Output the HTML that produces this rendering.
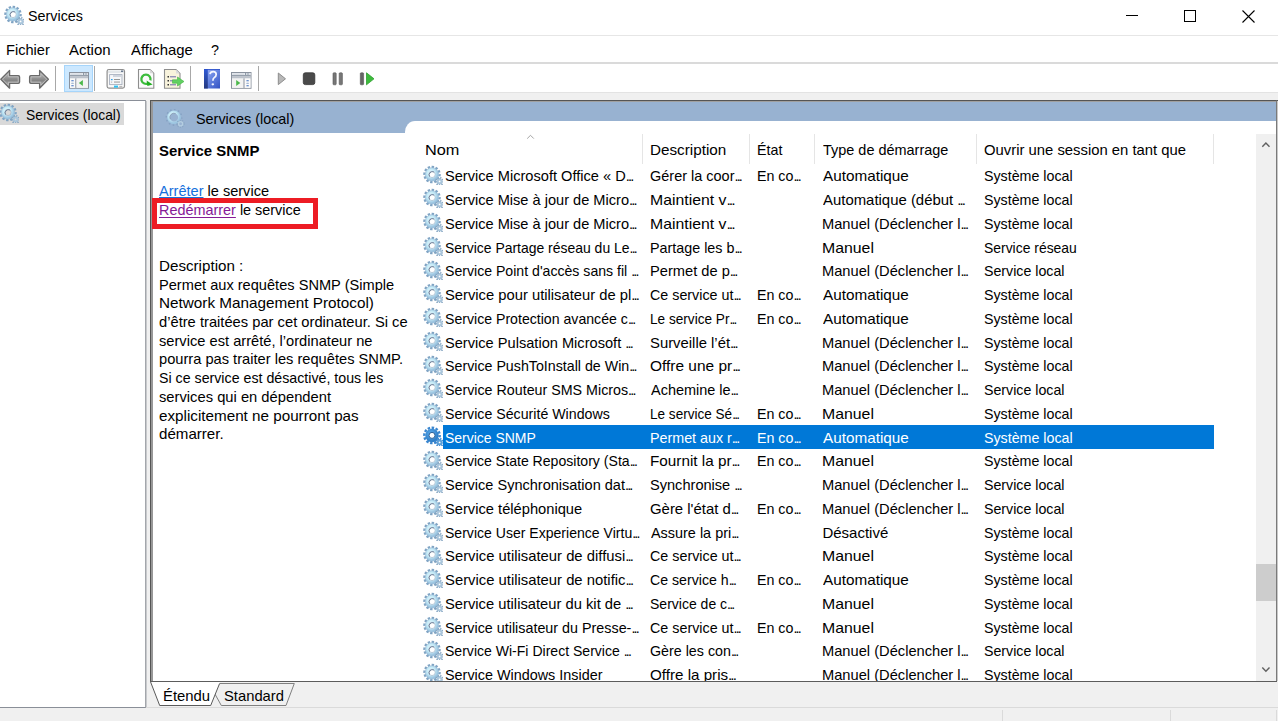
<!DOCTYPE html>
<html><head><meta charset="utf-8"><style>
html,body{margin:0;padding:0;}
body{width:1278px;height:721px;position:relative;overflow:hidden;background:#f0f0f0;font-family:"Liberation Sans",sans-serif;color:#000;}
.top{position:absolute;left:0;top:0;width:1278px;height:92px;background:#fff}
.t{position:absolute;white-space:nowrap;line-height:1;transform-origin:0 0;}
.c{overflow:hidden}
.b{position:absolute}
.ic{position:absolute;overflow:visible}
.el{font-style:normal;letter-spacing:-1.9px;}
.lk{color:#1670dc;text-decoration:underline;text-decoration-thickness:1px}
.lk2{color:#861a96;text-decoration:underline;text-decoration-thickness:1px;text-underline-offset:2px}
</style></head><body>
<div class="top"></div>

<svg width="0" height="0" style="position:absolute">
 <defs>
  <radialGradient id="gb" gradientUnits="userSpaceOnUse" cx="8" cy="8" r="7">
   <stop offset="0" stop-color="#eefaff"/>
   <stop offset="0.55" stop-color="#c6ebf7"/>
   <stop offset="1" stop-color="#9cc4e0"/>
  </radialGradient>
  <radialGradient id="gbs" gradientUnits="userSpaceOnUse" cx="8" cy="8" r="7">
   <stop offset="0" stop-color="#5fb0f0"/>
   <stop offset="1" stop-color="#2f7fc8"/>
  </radialGradient>
  <symbol id="gear" viewBox="0 0 20 20">
   <circle cx="9" cy="9.4" r="7.6" fill="none" stroke="#7fa3c3" stroke-width="2.3" stroke-dasharray="2.4 1.58" stroke-dashoffset="0.6"/>
   <circle cx="9" cy="9.4" r="4.95" fill="none" stroke="url(#gb)" stroke-width="3.5"/>
   <circle cx="9" cy="9.4" r="6.75" fill="none" stroke="#8fb3cf" stroke-width="0.5"/>
   <path d="M6.6 11.6 A3.3 3.3 0 0 1 11.0 7.0" fill="none" stroke="#60728c" stroke-width="1.0"/>
   <circle cx="9" cy="9.4" r="3.15" fill="none" stroke="#8aa0b8" stroke-width="0.5"/>
   <circle cx="16.6" cy="16.4" r="3.6" fill="none" stroke="#86a6c2" stroke-width="1.9" stroke-dasharray="1.3 1.14"/>
   <circle cx="16.6" cy="16.4" r="1.85" fill="none" stroke="#aac6dc" stroke-width="1.9"/>
  </symbol>
  <symbol id="gearsel" viewBox="0 0 20 20">
   <circle cx="9" cy="9.4" r="7.7" fill="none" stroke="#3a86cf" stroke-width="2.4" stroke-dasharray="2.5 1.53" stroke-dashoffset="0.6"/>
   <circle cx="9" cy="9.4" r="4.75" fill="none" stroke="url(#gbs)" stroke-width="4"/>
   <circle cx="9" cy="9.4" r="3.0" fill="#fff" stroke="#2a5f98" stroke-width="1.0"/>
   <circle cx="16.6" cy="16.4" r="3.6" fill="none" stroke="#3a86cf" stroke-width="1.9" stroke-dasharray="1.3 1.14"/>
   <circle cx="16.6" cy="16.4" r="1.85" fill="none" stroke="#5a9fd8" stroke-width="1.9"/>
  </symbol>
 </defs>
</svg>
<svg class="ic" style="left:4px;top:5px;width:20px;height:20px" viewBox="0 0 20 20"><use href="#gear"/></svg><div class="t " style="left:28.34px;top:7.94px;font-size:15px;transform:scaleX(0.9554);">Services</div><div class="b" style="left:1126px;top:15px;width:12px;height:1px;background:#000"></div><div class="b" style="left:1184px;top:10px;width:10px;height:10px;border:1px solid #000"></div><svg class="ic" style="left:1242px;top:10px;width:14px;height:13px" viewBox="0 0 14 13"><path d="M0.5 0.5L12.5 12.5M12.5 0.5L0.5 12.5" stroke="#000" stroke-width="1.1" fill="none"/></svg><div class="b" style="left:0;top:35px;width:1278px;height:1px;background:#e6e6e6"></div><div class="t " style="left:6.23px;top:41.84px;font-size:15px;transform:scaleX(0.9727);">Fichier</div><div class="t " style="left:69.30px;top:41.84px;font-size:15px;transform:scaleX(0.9976);">Action</div><div class="t " style="left:130.50px;top:41.84px;font-size:15px;transform:scaleX(0.9919);">Affichage</div><div class="t " style="left:211.34px;top:41.84px;font-size:15px;transform:scaleX(0.9571);">?</div><div class="b" style="left:0;top:62px;width:1278px;height:2px;background:#dadada"></div><svg class="ic" style="left:0;top:64px;width:400px;height:28px" viewBox="0 64 400 28">
 <defs>
  <linearGradient id="ag" x1="0" y1="0" x2="0" y2="1"><stop offset="0" stop-color="#b4b4b4"/><stop offset="0.6" stop-color="#858585"/><stop offset="1" stop-color="#a8a8a8"/></linearGradient>
  <linearGradient id="hb2" x1="0" y1="0" x2="1" y2="1"><stop offset="0" stop-color="#9db2f4"/><stop offset="0.5" stop-color="#6382e0"/><stop offset="1" stop-color="#3151c2"/></linearGradient>
  <linearGradient id="hb1" x1="0" y1="0" x2="0" y2="1"><stop offset="0" stop-color="#2f5ad6"/><stop offset="1" stop-color="#24387e"/></linearGradient>
 </defs>
 <!-- back arrow -->
 <path d="M0.8 79.2 L9.6 70.4 L9.6 75.6 L18.3 75.6 Q19.6 75.6 19.6 76.9 L19.6 82.1 Q19.6 83.4 18.3 83.4 L9.6 83.4 L9.6 88.2 Z" fill="#9c9c9c" stroke="#6a6a6a" stroke-width="1.3" stroke-linejoin="round"/>
 <path d="M2.6 79.2 L8.4 73.4 L8.4 76.8 L18.2 76.8 L18.2 82.2 L8.4 82.2 L8.4 85.2 Z" fill="url(#ag)" stroke="#c9c9c9" stroke-width="0.7" stroke-linejoin="round"/>
 <!-- forward arrow -->
 <path d="M48.4 79.2 L39.6 70.4 L39.6 75.6 L30.9 75.6 Q29.6 75.6 29.6 76.9 L29.6 82.1 Q29.6 83.4 30.9 83.4 L39.6 83.4 L39.6 88.2 Z" fill="#9c9c9c" stroke="#6a6a6a" stroke-width="1.3" stroke-linejoin="round"/>
 <path d="M46.6 79.2 L40.8 73.4 L40.8 76.8 L31 76.8 L31 82.2 L40.8 82.2 L40.8 85.2 Z" fill="url(#ag)" stroke="#c9c9c9" stroke-width="0.7" stroke-linejoin="round"/>
 <rect x="55" y="66" width="1" height="25" fill="#a8a8a8"/>
 <!-- selected button -->
 <rect x="64.5" y="65.5" width="28" height="26" fill="#cce8ff" stroke="#a6d5fb" stroke-width="1"/>
 <rect x="69.5" y="72.5" width="19" height="15.8" fill="#f2f2f2" stroke="#8a929e" stroke-width="1"/>
 <rect x="70" y="73" width="18" height="2.2" fill="#e6eaef"/>
 <rect x="70.5" y="73.8" width="11.5" height="0.7" fill="#c9ced6"/>
 <rect x="83" y="73.4" width="1.2" height="1.2" fill="#56657a"/><rect x="85" y="73.4" width="2.2" height="1.2" fill="#9aa4b2"/>
 <rect x="70" y="75.3" width="18" height="1" fill="#6f7c8e"/>
 <rect x="70" y="76.3" width="18" height="2.2" fill="#bcc2cb"/>
 <rect x="70" y="78.5" width="5.3" height="9.3" fill="#fafafa"/>
 <rect x="75.3" y="78.5" width="1.2" height="9.3" fill="#8a929e"/>
 <rect x="76.5" y="78.5" width="11.5" height="9.3" fill="#f3f3f3"/>
 <rect x="71.2" y="80.3" width="2.6" height="1" rx="0.5" fill="#3c6fc0"/><rect x="71.2" y="82.8" width="2.6" height="1" rx="0.5" fill="#8ea6c8"/><rect x="71.2" y="85.3" width="2.6" height="1" rx="0.5" fill="#3c6fc0"/>
 <path d="M78.8 83 L82.9 79.9 L82.9 86.1 Z" fill="#4cb84c"/>
 <rect x="94" y="66" width="1" height="25" fill="#a8a8a8"/>
 <!-- properties window icon -->
 <rect x="107.1" y="69.5" width="17.4" height="18.6" rx="1.8" fill="#fafafa" stroke="#8e8e8e" stroke-width="1.2"/>
 <rect x="108" y="70.5" width="15.6" height="2.5" fill="#e4e7ea"/>
 <rect x="121" y="70.5" width="2.2" height="1.5" fill="#6a7a90"/>
 <rect x="109.6" y="74.6" width="12.4" height="10" fill="#f6f7f9" stroke="#a7afbd" stroke-width="0.9"/>
 <rect x="113" y="75.2" width="8" height="1.6" fill="#c8ced8"/>
 <rect x="111" y="79" width="1.6" height="1.2" fill="#2aa2ee"/><rect x="114" y="79.1" width="6" height="0.9" fill="#8c8c8c"/>
 <rect x="111" y="81.6" width="1.2" height="1" fill="#b0b0b0"/><rect x="114" y="81.6" width="6" height="0.9" fill="#8c8c8c"/>
 <rect x="114" y="85.6" width="4" height="2" fill="#2cc0f2"/>
 <rect x="119.3" y="85.9" width="3" height="1.6" fill="#b8b8b8"/>
 <!-- refresh icon -->
 <path d="M138.5 69.5 L150 69.5 L153.8 73.3 L153.8 88.3 L138.5 88.3 Z" fill="#fbfbfb" stroke="#8e8e8e" stroke-width="1.1"/>
 <path d="M150 69.6 L150 73.3 L153.7 73.3 Z" fill="#d8d8d8"/>
 <path d="M148.3 83.2 A4.6 4.6 0 1 1 150.4 80.4" fill="none" stroke="#3cbc3c" stroke-width="2.3"/>
 <path d="M146.6 80.6 L147.4 86 L152.6 84.6 Z" fill="#1fae1f"/>
 <!-- export list icon -->
 <path d="M164.5 69.5 L176 69.5 L180 73.5 L180 88.3 L164.5 88.3 Z" fill="#f8f3dc" stroke="#8e8e8e" stroke-width="1.1"/>
 <path d="M176 69.6 L176 73.5 L179.9 73.5 Z" fill="#dcdcdc"/>
 <rect x="167.5" y="76" width="1.5" height="1.5" fill="#333"/><rect x="170" y="76.3" width="6" height="1" fill="#6a6aa8"/>
 <rect x="167.5" y="80" width="1.5" height="1.5" fill="#333"/><rect x="170" y="80.3" width="6" height="1" fill="#6a6aa8"/>
 <rect x="167.5" y="84" width="1.5" height="1.5" fill="#333"/><rect x="170" y="84.3" width="6" height="1" fill="#6a6aa8"/>
 <path d="M172.5 79.8 L177.5 79.8 L177.5 77 L184 81.5 L177.5 86 L177.5 83.2 L172.5 83.2 Z" fill="#62d062" stroke="#43b543" stroke-width="0.6"/>
 <rect x="190" y="66" width="1" height="25" fill="#a8a8a8"/>
 <!-- help -->
 <rect x="204" y="69" width="16" height="19.5" fill="url(#hb2)"/>
 <rect x="204" y="69" width="3.8" height="19.5" fill="url(#hb1)"/>
 <rect x="204" y="69" width="16" height="0.8" fill="#2b4fc8"/>
 <path d="M210 74.2 Q210.4 71.6 213.2 71.6 Q216.2 71.6 216.2 74.4 Q216.2 76.3 214.2 77.6 Q212.9 78.5 212.9 80.8" fill="none" stroke="#f4f6ff" stroke-width="1.7"/>
 <ellipse cx="212.8" cy="84.3" rx="1.3" ry="1.1" fill="#f4f6ff"/>
 <!-- action pane icon -->
 <rect x="231.5" y="72.5" width="19.5" height="15.8" fill="#f2f2f2" stroke="#8a929e" stroke-width="1"/>
 <rect x="232" y="73" width="18.5" height="2.2" fill="#e6eaef"/>
 <rect x="232.5" y="73.8" width="11.5" height="0.7" fill="#c9ced6"/>
 <rect x="245" y="73.4" width="1.2" height="1.2" fill="#56657a"/><rect x="247" y="73.4" width="2.2" height="1.2" fill="#9aa4b2"/>
 <rect x="232" y="75.3" width="18.5" height="1" fill="#6f7c8e"/>
 <rect x="232" y="76.3" width="18.5" height="2.2" fill="#bcc2cb"/>
 <rect x="232" y="78.5" width="11.5" height="9.3" fill="#f3f3f3"/>
 <rect x="243.5" y="78.5" width="1.2" height="9.3" fill="#8a929e"/>
 <rect x="244.7" y="78.5" width="5.8" height="9.3" fill="#fafafa"/>
 <rect x="246.3" y="80.3" width="2.6" height="1" rx="0.5" fill="#3c6fc0"/><rect x="246.3" y="82.8" width="2.6" height="1" rx="0.5" fill="#8ea6c8"/><rect x="246.3" y="85.3" width="2.6" height="1" rx="0.5" fill="#3c6fc0"/>
 <path d="M236.2 79.9 L240.3 83 L236.2 86.1 Z" fill="#4cb84c"/>
 <rect x="258" y="66" width="1" height="25" fill="#a8a8a8"/>
 <!-- play -->
 <path d="M278.3 73 L285.5 78.8 L278.3 84.6 Z" fill="#b8b8b8" stroke="#8d8d8d" stroke-width="1" stroke-linejoin="round"/>
 <!-- stop -->
 <rect x="303.3" y="72.8" width="11.5" height="11.8" rx="2" fill="#4a4a4a" stroke="#333" stroke-width="0.8"/>
 <!-- pause -->
 <rect x="333" y="72.8" width="3.2" height="12" rx="0.8" fill="#777" stroke="#555" stroke-width="0.6"/>
 <rect x="339.2" y="72.8" width="3.2" height="12" rx="0.8" fill="#777" stroke="#555" stroke-width="0.6"/>
 <!-- restart -->
 <rect x="360.3" y="72.8" width="3.3" height="12" rx="0.8" fill="#666" stroke="#555" stroke-width="0.6"/>
 <path d="M366.5 72.8 L374 78.8 L366.5 84.8 Z" fill="#3dbb3d" stroke="#2fa02f" stroke-width="0.8" stroke-linejoin="round"/>
</svg><div class="b" style="left:0;top:92px;width:1278px;height:1px;background:#e3e3e3"></div><div class="b" style="left:0;top:100px;width:145px;height:606px;background:#fff;border-top:1px solid #8a8f98;border-right:1px solid #a3a6ab;border-bottom:1px solid #8a8f98"></div><div class="b" style="left:146px;top:101px;width:1px;height:606px;background:#c8cacd"></div><div class="b" style="left:0;top:103px;width:124px;height:22px;background:#d9d9d9"></div><svg class="ic" style="left:-0.8px;top:102.8px;width:20px;height:20px" viewBox="0 0 20 20"><use href="#gear"/></svg><div class="t " style="left:25.98px;top:107.34px;font-size:15px;transform:scaleX(0.9218);">Services (local)</div><div class="b" style="left:150px;top:100px;width:1125px;height:580px;background:#fff;border:1px solid #555555;border-right-color:#7a7a7a"></div><div class="b" style="left:1277px;top:100px;width:1px;height:1px;background:#555"></div><div class="b" style="left:1277px;top:101px;width:1px;height:581px;background:#c8c8c8"></div><div class="b" style="left:151px;top:101px;width:1125px;height:1px;background:#a0a0a0"></div><div class="b" style="left:151px;top:101px;width:2px;height:580px;background:#989898"></div><div class="b" style="left:153px;top:102px;width:1123px;height:31px;background:#98b2d1"></div><div class="b" style="left:405px;top:121px;width:871px;height:13px;background:#fff;border-top-left-radius:10px 11px"></div><svg class="ic" style="left:164.75px;top:107.5px;width:20px;height:20px" viewBox="0 0 20 20">
 <circle cx="9" cy="9.4" r="7.6" fill="none" stroke="#86a3c4" stroke-width="1.8" stroke-dasharray="1.6 2.38" stroke-dashoffset="0.3"/>
 <circle cx="9" cy="9.4" r="5.5" fill="none" stroke="url(#gb)" stroke-width="2.7"/>
 <path d="M5.2 11.2 A4.2 4.2 0 0 1 10.6 5.5" fill="none" stroke="#7d8fa8" stroke-width="0.7"/>
 <circle cx="15.6" cy="15.8" r="3.4" fill="none" stroke="#8aa6c4" stroke-width="1.5" stroke-dasharray="1.1 1.34"/>
 <circle cx="15.6" cy="15.8" r="2.1" fill="none" stroke="#b4cde0" stroke-width="1.4"/>
</svg><div class="t " style="left:195.94px;top:111.04px;font-size:15px;transform:scaleX(0.9594);">Services (local)</div><div class="t " style="left:158.50px;top:142.54px;font-size:15px;transform:scaleX(0.9950);font-weight:bold">Service SNMP</div><div class="t " style="left:159.10px;top:183.96px;font-size:14.5px;transform:scaleX(1.0037);"><span class="lk">Arrêter</span> le service</div><div class="t " style="left:159.10px;top:202.76px;font-size:14.5px;transform:scaleX(0.9937);"><span class="lk2">Redémarrer</span> le service</div><div class="b" style="left:152px;top:198px;width:166px;height:31px;box-sizing:border-box;border:5px solid #ed1c24"></div><div class="t " style="left:159.05px;top:258.96px;font-size:14.5px;transform:scaleX(1.0462);">Description :</div><div class="t " style="left:159.09px;top:277.66px;font-size:14.5px;transform:scaleX(1.0073);">Permet aux requêtes SNMP (Simple</div><div class="t " style="left:159.05px;top:296.36px;font-size:14.5px;transform:scaleX(1.0540);">Network Management Protocol)</div><div class="t " style="left:159.09px;top:315.06px;font-size:14.5px;transform:scaleX(1.0148);">d’être traitées par cet ordinateur. Si ce</div><div class="t " style="left:159.09px;top:333.76px;font-size:14.5px;transform:scaleX(1.0110);">service est arrêté, l’ordinateur ne</div><div class="t " style="left:159.09px;top:352.46px;font-size:14.5px;transform:scaleX(1.0105);">pourra pas traiter les requêtes SNMP.</div><div class="t " style="left:159.12px;top:371.16px;font-size:14.5px;transform:scaleX(0.9798);">Si ce service est désactivé, tous les</div><div class="t " style="left:159.08px;top:389.86px;font-size:14.5px;transform:scaleX(1.0161);">services qui en dépendent</div><div class="t " style="left:159.05px;top:408.56px;font-size:14.5px;transform:scaleX(1.0497);">explicitement ne pourront pas</div><div class="t " style="left:159.06px;top:427.26px;font-size:14.5px;transform:scaleX(1.0417);">démarrer.</div><div class="t " style="left:424.71px;top:142.34px;font-size:15px;transform:scaleX(1.0867);">Nom</div><svg class="ic" style="left:526px;top:134px;width:9px;height:6px" viewBox="0 0 9 6"><path d="M1.2 4.6 L4.5 1.3 L7.8 4.6" fill="none" stroke="#9a9a9a" stroke-width="0.9"/></svg><div class="t " style="left:649.78px;top:142.34px;font-size:15px;transform:scaleX(1.0164);">Description</div><div class="t " style="left:757.35px;top:142.34px;font-size:15px;transform:scaleX(0.9500);">État</div><div class="t " style="left:823.40px;top:142.34px;font-size:15px;transform:scaleX(0.9638);">Type de démarrage</div><div class="t " style="left:983.71px;top:142.34px;font-size:15px;transform:scaleX(0.9892);">Ouvrir une session en tant que</div><div class="b" style="left:642px;top:134px;width:1px;height:30px;background:#e5e5e5"></div><div class="b" style="left:749px;top:134px;width:1px;height:30px;background:#e5e5e5"></div><div class="b" style="left:814px;top:134px;width:1px;height:30px;background:#e5e5e5"></div><div class="b" style="left:976px;top:134px;width:1px;height:30px;background:#e5e5e5"></div><div class="b" style="left:1213px;top:134px;width:1px;height:30px;background:#e5e5e5"></div><svg class="ic" style="left:422.5px;top:164.60000000000002px;width:20px;height:20px" viewBox="0 0 20 20"><use href="#gear"/></svg><div class="t " style="left:445.03px;top:168.34px;font-size:15px;transform:scaleX(0.9740);">Service Microsoft Office « D<i class="el">...</i></div><div class="t " style="left:649.84px;top:168.34px;font-size:15px;transform:scaleX(0.9649);">Gérer la coor<i class="el">...</i></div><div class="t " style="left:757.35px;top:168.34px;font-size:15px;transform:scaleX(0.9489);">En co<i class="el">...</i></div><div class="t " style="left:823.40px;top:168.34px;font-size:15px;transform:scaleX(1.0190);">Automatique</div><div class="t " style="left:983.75px;top:168.34px;font-size:15px;transform:scaleX(0.9489);">Système local</div><svg class="ic" style="left:422.5px;top:188.35000000000002px;width:20px;height:20px" viewBox="0 0 20 20"><use href="#gear"/></svg><div class="t " style="left:445.03px;top:192.09px;font-size:15px;transform:scaleX(0.9724);">Service Mise à jour de Micro<i class="el">...</i></div><div class="t " style="left:649.75px;top:192.09px;font-size:15px;transform:scaleX(1.0532);">Maintient v<i class="el">...</i></div><div class="t " style="left:823.40px;top:192.09px;font-size:15px;transform:scaleX(0.9944);">Automatique (début <i class="el">...</i></div><div class="t " style="left:983.75px;top:192.09px;font-size:15px;transform:scaleX(0.9489);">Système local</div><svg class="ic" style="left:422.5px;top:212.10000000000002px;width:20px;height:20px" viewBox="0 0 20 20"><use href="#gear"/></svg><div class="t " style="left:445.03px;top:215.84px;font-size:15px;transform:scaleX(0.9724);">Service Mise à jour de Micro<i class="el">...</i></div><div class="t " style="left:649.75px;top:215.84px;font-size:15px;transform:scaleX(1.0532);">Maintient v<i class="el">...</i></div><div class="t " style="left:822.42px;top:215.84px;font-size:15px;transform:scaleX(0.9777);">Manuel (Déclencher l<i class="el">...</i></div><div class="t " style="left:983.75px;top:215.84px;font-size:15px;transform:scaleX(0.9489);">Système local</div><svg class="ic" style="left:422.5px;top:235.85000000000002px;width:20px;height:20px" viewBox="0 0 20 20"><use href="#gear"/></svg><div class="t " style="left:445.07px;top:239.59px;font-size:15px;transform:scaleX(0.9298);">Service Partage réseau du Le<i class="el">...</i></div><div class="t " style="left:649.85px;top:239.59px;font-size:15px;transform:scaleX(0.9547);">Partage les b<i class="el">...</i></div><div class="t " style="left:822.34px;top:239.59px;font-size:15px;transform:scaleX(1.0553);">Manuel</div><div class="t " style="left:983.77px;top:239.59px;font-size:15px;transform:scaleX(0.9276);">Service réseau</div><svg class="ic" style="left:422.5px;top:259.6px;width:20px;height:20px" viewBox="0 0 20 20"><use href="#gear"/></svg><div class="t " style="left:445.06px;top:263.34px;font-size:15px;transform:scaleX(0.9405);">Service Point d'accès sans fil <i class="el">...</i></div><div class="t " style="left:649.82px;top:263.34px;font-size:15px;transform:scaleX(0.9773);">Permet de p<i class="el">...</i></div><div class="t " style="left:822.42px;top:263.34px;font-size:15px;transform:scaleX(0.9777);">Manuel (Déclencher l<i class="el">...</i></div><div class="t " style="left:983.75px;top:263.34px;font-size:15px;transform:scaleX(0.9470);">Service local</div><svg class="ic" style="left:422.5px;top:283.35px;width:20px;height:20px" viewBox="0 0 20 20"><use href="#gear"/></svg><div class="t " style="left:445.02px;top:287.09px;font-size:15px;transform:scaleX(0.9837);">Service pour utilisateur de pl<i class="el">...</i></div><div class="t " style="left:649.85px;top:287.09px;font-size:15px;transform:scaleX(0.9532);">Ce service ut<i class="el">...</i></div><div class="t " style="left:757.35px;top:287.09px;font-size:15px;transform:scaleX(0.9489);">En co<i class="el">...</i></div><div class="t " style="left:823.40px;top:287.09px;font-size:15px;transform:scaleX(1.0190);">Automatique</div><div class="t " style="left:983.75px;top:287.09px;font-size:15px;transform:scaleX(0.9489);">Système local</div><svg class="ic" style="left:422.5px;top:307.1px;width:20px;height:20px" viewBox="0 0 20 20"><use href="#gear"/></svg><div class="t " style="left:445.06px;top:310.84px;font-size:15px;transform:scaleX(0.9413);">Service Protection avancée c<i class="el">...</i></div><div class="t " style="left:649.89px;top:310.84px;font-size:15px;transform:scaleX(0.9074);">Le service Pr<i class="el">...</i></div><div class="t " style="left:757.35px;top:310.84px;font-size:15px;transform:scaleX(0.9489);">En co<i class="el">...</i></div><div class="t " style="left:823.40px;top:310.84px;font-size:15px;transform:scaleX(1.0190);">Automatique</div><div class="t " style="left:983.75px;top:310.84px;font-size:15px;transform:scaleX(0.9489);">Système local</div><svg class="ic" style="left:422.5px;top:330.85px;width:20px;height:20px" viewBox="0 0 20 20"><use href="#gear"/></svg><div class="t " style="left:445.03px;top:334.59px;font-size:15px;transform:scaleX(0.9740);">Service Pulsation Microsoft <i class="el">...</i></div><div class="t " style="left:649.81px;top:334.59px;font-size:15px;transform:scaleX(0.9898);">Surveille l’ét<i class="el">...</i></div><div class="t " style="left:822.42px;top:334.59px;font-size:15px;transform:scaleX(0.9777);">Manuel (Déclencher l<i class="el">...</i></div><div class="t " style="left:983.75px;top:334.59px;font-size:15px;transform:scaleX(0.9489);">Système local</div><svg class="ic" style="left:422.5px;top:354.6px;width:20px;height:20px" viewBox="0 0 20 20"><use href="#gear"/></svg><div class="t " style="left:445.05px;top:358.34px;font-size:15px;transform:scaleX(0.9483);">Service PushToInstall de Win<i class="el">...</i></div><div class="t " style="left:649.77px;top:358.34px;font-size:15px;transform:scaleX(1.0302);">Offre une pr<i class="el">...</i></div><div class="t " style="left:822.42px;top:358.34px;font-size:15px;transform:scaleX(0.9777);">Manuel (Déclencher l<i class="el">...</i></div><div class="t " style="left:983.75px;top:358.34px;font-size:15px;transform:scaleX(0.9489);">Système local</div><svg class="ic" style="left:422.5px;top:378.35px;width:20px;height:20px" viewBox="0 0 20 20"><use href="#gear"/></svg><div class="t " style="left:445.05px;top:382.09px;font-size:15px;transform:scaleX(0.9508);">Service Routeur SMS Micros<i class="el">...</i></div><div class="t " style="left:650.80px;top:382.09px;font-size:15px;transform:scaleX(0.9644);">Achemine le<i class="el">...</i></div><div class="t " style="left:822.42px;top:382.09px;font-size:15px;transform:scaleX(0.9777);">Manuel (Déclencher l<i class="el">...</i></div><div class="t " style="left:983.75px;top:382.09px;font-size:15px;transform:scaleX(0.9470);">Service local</div><svg class="ic" style="left:422.5px;top:402.1px;width:20px;height:20px" viewBox="0 0 20 20"><use href="#gear"/></svg><div class="t " style="left:445.05px;top:405.84px;font-size:15px;transform:scaleX(0.9457);">Service Sécurité Windows</div><div class="t " style="left:649.90px;top:405.84px;font-size:15px;transform:scaleX(0.9041);">Le service Sé<i class="el">...</i></div><div class="t " style="left:757.35px;top:405.84px;font-size:15px;transform:scaleX(0.9489);">En co<i class="el">...</i></div><div class="t " style="left:822.34px;top:405.84px;font-size:15px;transform:scaleX(1.0553);">Manuel</div><div class="t " style="left:983.75px;top:405.84px;font-size:15px;transform:scaleX(0.9489);">Système local</div><div class="b" style="left:443px;top:425px;width:771px;height:24px;background:#0078d7"></div><svg class="ic" style="left:422.5px;top:425.85px;width:20px;height:20px" viewBox="0 0 20 20"><use href="#gearsel"/></svg><div class="t " style="left:445.07px;top:429.59px;font-size:15px;transform:scaleX(0.9312);;color:#fff">Service SNMP</div><div class="t " style="left:649.85px;top:429.59px;font-size:15px;transform:scaleX(0.9527);;color:#fff">Permet aux r<i class="el">...</i></div><div class="t " style="left:757.35px;top:429.59px;font-size:15px;transform:scaleX(0.9489);;color:#fff">En co<i class="el">...</i></div><div class="t " style="left:823.40px;top:429.59px;font-size:15px;transform:scaleX(1.0190);;color:#fff">Automatique</div><div class="t " style="left:983.75px;top:429.59px;font-size:15px;transform:scaleX(0.9489);;color:#fff">Système local</div><svg class="ic" style="left:422.5px;top:449.6px;width:20px;height:20px" viewBox="0 0 20 20"><use href="#gear"/></svg><div class="t " style="left:445.06px;top:453.34px;font-size:15px;transform:scaleX(0.9384);">Service State Repository (Sta<i class="el">...</i></div><div class="t " style="left:649.78px;top:453.34px;font-size:15px;transform:scaleX(1.0184);">Fournit la pr<i class="el">...</i></div><div class="t " style="left:757.35px;top:453.34px;font-size:15px;transform:scaleX(0.9489);">En co<i class="el">...</i></div><div class="t " style="left:822.34px;top:453.34px;font-size:15px;transform:scaleX(1.0553);">Manuel</div><div class="t " style="left:983.75px;top:453.34px;font-size:15px;transform:scaleX(0.9489);">Système local</div><svg class="ic" style="left:422.5px;top:473.35px;width:20px;height:20px" viewBox="0 0 20 20"><use href="#gear"/></svg><div class="t " style="left:445.03px;top:477.09px;font-size:15px;transform:scaleX(0.9679);">Service Synchronisation dat<i class="el">...</i></div><div class="t " style="left:649.83px;top:477.09px;font-size:15px;transform:scaleX(0.9720);">Synchronise <i class="el">...</i></div><div class="t " style="left:822.42px;top:477.09px;font-size:15px;transform:scaleX(0.9777);">Manuel (Déclencher l<i class="el">...</i></div><div class="t " style="left:983.75px;top:477.09px;font-size:15px;transform:scaleX(0.9470);">Service local</div><svg class="ic" style="left:422.5px;top:497.1px;width:20px;height:20px" viewBox="0 0 20 20"><use href="#gear"/></svg><div class="t " style="left:445.02px;top:500.84px;font-size:15px;transform:scaleX(0.9791);">Service téléphonique</div><div class="t " style="left:649.81px;top:500.84px;font-size:15px;transform:scaleX(0.9943);">Gère l'état d<i class="el">...</i></div><div class="t " style="left:757.35px;top:500.84px;font-size:15px;transform:scaleX(0.9489);">En co<i class="el">...</i></div><div class="t " style="left:822.42px;top:500.84px;font-size:15px;transform:scaleX(0.9777);">Manuel (Déclencher l<i class="el">...</i></div><div class="t " style="left:983.75px;top:500.84px;font-size:15px;transform:scaleX(0.9470);">Service local</div><svg class="ic" style="left:422.5px;top:520.8499999999999px;width:20px;height:20px" viewBox="0 0 20 20"><use href="#gear"/></svg><div class="t " style="left:445.06px;top:524.59px;font-size:15px;transform:scaleX(0.9369);">Service User Experience Virtu<i class="el">...</i></div><div class="t " style="left:650.80px;top:524.59px;font-size:15px;transform:scaleX(0.9615);">Assure la pri<i class="el">...</i></div><div class="t " style="left:822.40px;top:524.59px;font-size:15px;">Désactivé</div><div class="t " style="left:983.75px;top:524.59px;font-size:15px;transform:scaleX(0.9489);">Système local</div><svg class="ic" style="left:422.5px;top:544.5999999999999px;width:20px;height:20px" viewBox="0 0 20 20"><use href="#gear"/></svg><div class="t " style="left:445.01px;top:548.34px;font-size:15px;transform:scaleX(0.9884);">Service utilisateur de diffusi<i class="el">...</i></div><div class="t " style="left:649.85px;top:548.34px;font-size:15px;transform:scaleX(0.9543);">Ce service ut<i class="el">...</i></div><div class="t " style="left:822.34px;top:548.34px;font-size:15px;transform:scaleX(1.0553);">Manuel</div><div class="t " style="left:983.75px;top:548.34px;font-size:15px;transform:scaleX(0.9489);">Système local</div><svg class="ic" style="left:422.5px;top:568.3499999999999px;width:20px;height:20px" viewBox="0 0 20 20"><use href="#gear"/></svg><div class="t " style="left:445.01px;top:572.09px;font-size:15px;transform:scaleX(0.9884);">Service utilisateur de notific<i class="el">...</i></div><div class="t " style="left:649.86px;top:572.09px;font-size:15px;transform:scaleX(0.9433);">Ce service h<i class="el">...</i></div><div class="t " style="left:757.35px;top:572.09px;font-size:15px;transform:scaleX(0.9489);">En co<i class="el">...</i></div><div class="t " style="left:823.40px;top:572.09px;font-size:15px;transform:scaleX(1.0190);">Automatique</div><div class="t " style="left:983.75px;top:572.09px;font-size:15px;transform:scaleX(0.9489);">Système local</div><svg class="ic" style="left:422.5px;top:592.0999999999999px;width:20px;height:20px" viewBox="0 0 20 20"><use href="#gear"/></svg><div class="t " style="left:445.02px;top:595.84px;font-size:15px;transform:scaleX(0.9832);">Service utilisateur du kit de <i class="el">...</i></div><div class="t " style="left:649.87px;top:595.84px;font-size:15px;transform:scaleX(0.9337);">Service de c<i class="el">...</i></div><div class="t " style="left:822.34px;top:595.84px;font-size:15px;transform:scaleX(1.0553);">Manuel</div><div class="t " style="left:983.75px;top:595.84px;font-size:15px;transform:scaleX(0.9489);">Système local</div><svg class="ic" style="left:422.5px;top:615.8499999999999px;width:20px;height:20px" viewBox="0 0 20 20"><use href="#gear"/></svg><div class="t " style="left:445.04px;top:619.59px;font-size:15px;transform:scaleX(0.9554);">Service utilisateur du Presse-<i class="el">...</i></div><div class="t " style="left:649.85px;top:619.59px;font-size:15px;transform:scaleX(0.9543);">Ce service ut<i class="el">...</i></div><div class="t " style="left:757.35px;top:619.59px;font-size:15px;transform:scaleX(0.9489);">En co<i class="el">...</i></div><div class="t " style="left:822.34px;top:619.59px;font-size:15px;transform:scaleX(1.0553);">Manuel</div><div class="t " style="left:983.75px;top:619.59px;font-size:15px;transform:scaleX(0.9489);">Système local</div><svg class="ic" style="left:422.5px;top:639.5999999999999px;width:20px;height:20px" viewBox="0 0 20 20"><use href="#gear"/></svg><div class="t " style="left:445.06px;top:643.34px;font-size:15px;transform:scaleX(0.9364);">Service Wi-Fi Direct Service <i class="el">...</i></div><div class="t " style="left:649.85px;top:643.34px;font-size:15px;transform:scaleX(0.9511);">Gère les con<i class="el">...</i></div><div class="t " style="left:822.42px;top:643.34px;font-size:15px;transform:scaleX(0.9777);">Manuel (Déclencher l<i class="el">...</i></div><div class="t " style="left:983.75px;top:643.34px;font-size:15px;transform:scaleX(0.9470);">Service local</div><svg class="ic" style="left:422.5px;top:663.3499999999999px;width:20px;height:20px" viewBox="0 0 20 20"><use href="#gear"/></svg><div class="t " style="left:445.04px;top:667.09px;font-size:15px;transform:scaleX(0.9589);">Service Windows Insider</div><div class="t " style="left:649.79px;top:667.09px;font-size:15px;transform:scaleX(1.0107);">Offre la pris<i class="el">...</i></div><div class="t " style="left:822.42px;top:667.09px;font-size:15px;transform:scaleX(0.9777);">Manuel (Déclencher l<i class="el">...</i></div><div class="t " style="left:983.75px;top:667.09px;font-size:15px;transform:scaleX(0.9489);">Système local</div><div class="b" style="left:150px;top:681px;width:1128px;height:26px;background:#f0f0f0"></div><div class="b" style="left:150px;top:681px;width:1127px;height:1px;background:#5c5c5c"></div><div class="b" style="left:1256px;top:134px;width:20px;height:547px;background:#f0f0f0"></div><div class="b" style="left:1256px;top:564px;width:20px;height:37px;background:#cdcdcd"></div><svg class="ic" style="left:1260px;top:140px;width:12px;height:10px" viewBox="0 0 12 10"><path d="M2.3 6.8 L5.9 3 L9.5 6.8" fill="none" stroke="#606060" stroke-width="1.4"/></svg><svg class="ic" style="left:1260px;top:664px;width:12px;height:10px" viewBox="0 0 12 10"><path d="M2.3 3.5 L5.9 7.3 L9.5 3.5" fill="none" stroke="#606060" stroke-width="1.4"/></svg><svg class="ic" style="left:140px;top:680px;width:170px;height:30px" viewBox="140 680 170 30">
 <path d="M219.6 683.5 L294.3 683.5 L286 705.5 L221.3 705.5 L213 690.5 Z" fill="#f0f0f0" stroke="#808080" stroke-width="1"/>
 <path d="M150.6 682 L159.7 705.5 L210.7 705.5 L219.6 683.5 L219.6 682 Z" fill="#fff" stroke="none"/>
 <path d="M150.6 682 L159.7 705.5 L210.7 705.5 L219.6 683.5" fill="none" stroke="#5a5a5a" stroke-width="1"/>
</svg><div class="t " style="left:162.61px;top:687.84px;font-size:15px;transform:scaleX(0.9913);">Étendu</div><div class="t " style="left:223.72px;top:687.84px;font-size:15px;transform:scaleX(0.9847);">Standard</div><div class="b" style="left:146px;top:707px;width:1132px;height:1px;background:#dadada"></div><div class="b" style="left:1002px;top:710px;width:1px;height:11px;background:#dadada"></div><div class="b" style="left:1170px;top:710px;width:1px;height:11px;background:#dadada"></div><div class="b" style="left:1276px;top:710px;width:1px;height:11px;background:#dadada"></div>
</body></html>
